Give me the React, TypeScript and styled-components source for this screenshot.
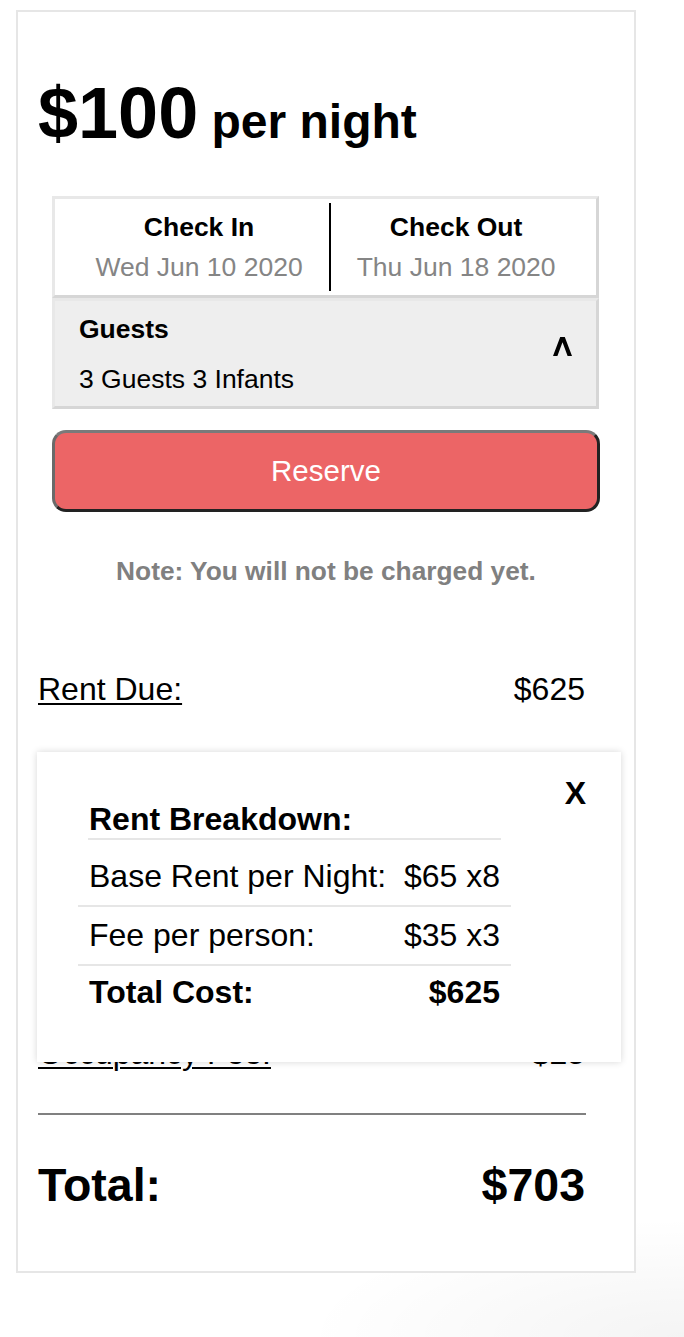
import React from "react";
import styled, { createGlobalStyle } from "styled-components";

const GlobalStyle = createGlobalStyle`
  html, body { margin: 0; padding: 0; min-height: 100%; }
  body {
    font-family: "Liberation Sans", Arial, sans-serif;
    color: #000;
    min-height: 1337px;
    background:
      radial-gradient(ellipse 380px 120px at 100% 100%, rgba(0,0,0,0.045), rgba(0,0,0,0) 100%),
      #fff;
  }
  #root { padding: 10px 0 0 16px; }
`;

const Card = styled.div`
  position: relative;
  box-sizing: border-box;
  width: 620px;
  border: 2px solid #e6e6e6;
  background: #fff;
  padding: 0 0 59px 0;
`;

const PriceHeading = styled.h1`
  margin: 61px 0 0 20px;
  font-size: 72px;
  line-height: 80px;
  font-weight: 700;
`;

const PerNight = styled.span`
  font-size: 48px;
  line-height: 48px;
`;

const BookingBox = styled.div`
  width: 547px;
  margin: 43px 0 0 34px;
`;

const Panel = styled.div<{ $bg?: string }>`
  box-sizing: border-box;
  border: 3px solid;
  border-color: #e8e8e8 #d6d6d6 #d6d6d6 #e8e8e8;
  background: ${(p) => p.$bg || "#fff"};
`;

const DateRow = styled(Panel)`
  display: flex;
  justify-content: center;
  padding: 4px 0;
`;

const DateCell = styled.div<{ $divider?: boolean }>`
  padding: 4px 26px;
  text-align: center;
  border-left: ${(p) => (p.$divider ? "2px solid #000" : "none")};
`;

const CellTitle = styled.div`
  font-size: 26.5px;
  line-height: 40px;
  font-weight: 700;
`;

const CellDate = styled.div`
  font-size: 26.5px;
  line-height: 40px;
  color: #858585;
`;

const GuestsRow = styled(Panel)`
  display: flex;
  justify-content: space-between;
  align-items: flex-start;
  padding: 8px 24px 7px;
`;

const GuestsValue = styled.div`
  margin-top: 10px;
  font-size: 26.5px;
  line-height: 40px;
`;

const Caret = styled.svg`
  margin-top: 28px;
  width: 19px;
  height: 19px;
  display: block;
`;

const ReserveButton = styled.button`
  box-sizing: border-box;
  display: block;
  width: 548px;
  height: 82px;
  margin: 21px 0 0 34px;
  border: 3px solid;
  border-color: #7a7a7a #222 #222 #6a6a6a;
  border-radius: 14px;
  background: #ec6566;
  color: #fff;
  font-family: "Liberation Sans", Arial, sans-serif;
  font-size: 29.5px;
  padding: 0;
  cursor: pointer;
`;

const Note = styled.p`
  margin: 44px 0 0;
  text-align: center;
  font-size: 26.3px;
  line-height: 30px;
  font-weight: 700;
  color: #808080;
`;

const FeeList = styled.div`
  width: 547px;
  margin: 83px 0 0 20px;
  display: flex;
  flex-direction: column;
  gap: 81.3px;
`;

const FeeRow = styled.div`
  display: flex;
  justify-content: space-between;
  font-size: 32px;
  line-height: 40px;
`;

const FeeLabel = styled.span`
  text-decoration: underline;
  text-decoration-thickness: 2px;
  text-underline-offset: 3px;
`;

const Divider = styled.div`
  width: 548px;
  height: 2px;
  margin: 40.1px 0 0 20px;
  background: #808080;
`;

const TotalRow = styled.div`
  width: 547px;
  margin: 42.6px 0 0 20px;
  display: flex;
  justify-content: space-between;
  font-size: 46.5px;
  line-height: 54px;
  font-weight: 700;
`;

const Popup = styled.div`
  position: absolute;
  top: 740px;
  left: 19px;
  width: 584px;
  height: 310px;
  box-sizing: border-box;
  background: #fff;
  box-shadow: 0 0 7px rgba(0, 0, 0, 0.16);
  padding: 49px 0 0 41px;
`;

const CloseButton = styled.span`
  position: absolute;
  top: 23px;
  right: 35px;
  font-size: 32px;
  line-height: 37px;
  font-weight: 700;
  cursor: pointer;
`;

const Breakdown = styled.div`
  width: 433px;
  font-size: 32px;
  line-height: 37px;
`;

const BreakdownHeader = styled.div`
  margin: 0 10px;
  padding-left: 1px;
  font-weight: 700;
  border-bottom: 2px solid #e6e6e6;
`;

const BreakdownRow = styled.div<{ $top: number; $bold?: boolean; $last?: boolean }>`
  display: flex;
  justify-content: space-between;
  padding: ${(p) => p.$top}px 11px ${(p) => (p.$last ? 0 : 10)}px;
  font-weight: ${(p) => (p.$bold ? 700 : 400)};
  border-bottom: ${(p) => (p.$last ? "none" : "2px solid #e6e6e6")};
`;

const fees = [
  { label: "Rent Due:", value: "$625" },
  { label: "Cleaning Fee:", value: "$30" },
  { label: "Service Fee:", value: "$23" },
  { label: "Occupancy Fee:", value: "$25" },
];

export default function App() {
  return (
    <>
      <GlobalStyle />
      <Card>
        <PriceHeading>
          $100<PerNight> per night</PerNight>
        </PriceHeading>

        <BookingBox>
          <DateRow>
            <DateCell>
              <CellTitle>Check In</CellTitle>
              <CellDate>Wed Jun 10 2020</CellDate>
            </DateCell>
            <DateCell $divider>
              <CellTitle>Check Out</CellTitle>
              <CellDate>Thu Jun 18 2020</CellDate>
            </DateCell>
          </DateRow>
          <GuestsRow $bg="#eeeeee">
            <div>
              <CellTitle>Guests</CellTitle>
              <GuestsValue>3 Guests 3 Infants</GuestsValue>
            </div>
            <Caret viewBox="0 0 19 19" aria-hidden="true">
              <polygon points="0,19 7.2,0 11.8,0 19,19 14.6,19 9.5,5.2 4.4,19" fill="#000" />
            </Caret>
          </GuestsRow>
        </BookingBox>

        <ReserveButton>Reserve</ReserveButton>

        <Note>Note: You will not be charged yet.</Note>

        <FeeList>
          {fees.map((f) => (
            <FeeRow key={f.label}>
              <FeeLabel>{f.label}</FeeLabel>
              <span>{f.value}</span>
            </FeeRow>
          ))}
        </FeeList>

        <Divider />

        <TotalRow>
          <span>Total:</span>
          <span>$703</span>
        </TotalRow>

        <Popup>
          <CloseButton>X</CloseButton>
          <Breakdown>
            <BreakdownHeader>Rent Breakdown:</BreakdownHeader>
            <BreakdownRow $top={18}>
              <span>Base Rent per Night:</span>
              <span>$65 x8</span>
            </BreakdownRow>
            <BreakdownRow $top={10}>
              <span>Fee per person:</span>
              <span>$35 x3</span>
            </BreakdownRow>
            <BreakdownRow $top={8} $bold $last>
              <span>Total Cost:</span>
              <span>$625</span>
            </BreakdownRow>
          </Breakdown>
        </Popup>
      </Card>
    </>
  );
}
